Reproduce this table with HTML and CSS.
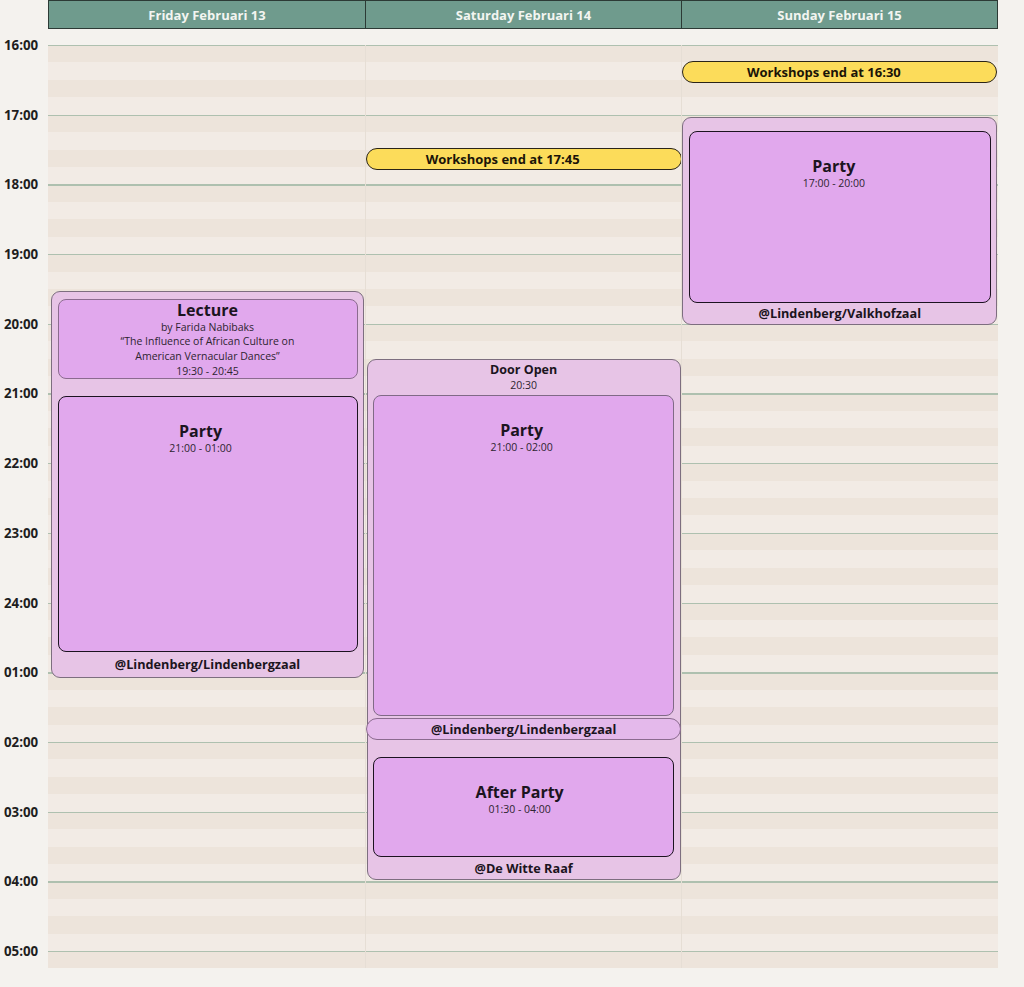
FILE: index.html
```html
<!DOCTYPE html>
<html>
<head>
<meta charset="utf-8">
<title>Schedule</title>
<link rel="stylesheet" href="styles.css">
</head>
<body>
<div class="page">
  <div class="head">
    <div class="head-cells">
      <div class="hcell">Friday Februari 13</div>
      <div class="hcell">Saturday Februari 14</div>
      <div class="hcell">Sunday Februari 15</div>
    </div>
  </div>
  <div class="body">
    <div class="times">
      <div class="t">16:00</div>
      <div class="t">17:00</div>
      <div class="t">18:00</div>
      <div class="t">19:00</div>
      <div class="t">20:00</div>
      <div class="t">21:00</div>
      <div class="t">22:00</div>
      <div class="t">23:00</div>
      <div class="t">24:00</div>
      <div class="t">01:00</div>
      <div class="t">02:00</div>
      <div class="t">03:00</div>
      <div class="t">04:00</div>
      <div class="t">05:00</div>
    </div>
    <div class="grid">
      <div class="day">
        <div class="block block-fri" style="top:246px;height:387px">
          <div class="sub lecture" style="height:80px">
            <div class="title-s">Lecture</div>
            <div class="line">by Farida Nabibaks</div>
            <div class="line">“The Influence of African Culture on<br>American Vernacular Dances”</div>
            <div class="line">19:30 - 20:45</div>
          </div>
          <div class="main party-fri" style="height:256px">
            <div class="title">Party</div>
            <div class="time">21:00 - 01:00</div>
          </div>
          <div class="venue">@Lindenberg/Lindenbergzaal</div>
        </div>
      </div>
      <div class="day">
        <div class="note note-sat" style="top:103px">Workshops end at 17:45</div>
        <div class="block block-sat" style="top:314px;height:521px">
          <div class="door">
            <div class="door-title">Door Open</div>
            <div class="time">20:30</div>
          </div>
          <div class="main soft" style="height:321px">
            <div class="title">Party</div>
            <div class="time">21:00 - 02:00</div>
          </div>
          <div class="venue-pill">@Lindenberg/Lindenbergzaal</div>
          <div class="main after" style="height:100px">
            <div class="title">After Party</div>
            <div class="time">01:30 - 04:00</div>
          </div>
          <div class="venue">@De Witte Raaf</div>
        </div>
      </div>
      <div class="day">
        <div class="note note-sun" style="top:16px">Workshops end at 16:30</div>
        <div class="block block-sun" style="top:72px;height:208px">
          <div class="main party-sun" style="height:172px">
            <div class="title">Party</div>
            <div class="time">17:00 - 20:00</div>
          </div>
          <div class="venue">@Lindenberg/Valkhofzaal</div>
        </div>
      </div>
    </div>
  </div>
</div>
</body>
</html>
```

FILE: styles.css
```css
* { box-sizing: border-box; }

body {
  margin: 0;
  background: #f4f2ee;
  font-family: "Open Sans", "Noto Sans", "Liberation Sans", sans-serif;
  color: #1b1420;
}

.page {
  width: 1024px;
  height: 987px;
  overflow: hidden;
}

.head {
  display: flex;
  padding-left: 48px;
}

.head-cells {
  width: 950px;
  height: 29px;
  display: grid;
  grid-template-columns: repeat(3, 1fr);
  background: #6f9b8d;
  border: 1.5px solid #2c3a35;
}

.hcell {
  display: flex;
  align-items: center;
  justify-content: center;
  color: #f3f5f1;
  font-weight: 700;
  font-size: 13px;
}

.hcell + .hcell {
  border-left: 1.5px solid #2c3a35;
}

.body {
  display: flex;
  align-items: flex-start;
  margin-top: 16px;
}

.times {
  width: 48px;
  margin-top: -34.85px;
  display: flex;
  flex-direction: column;
}

.t {
  height: 69.7px;
  display: flex;
  align-items: center;
  padding-left: 4px;
  font-weight: 700;
  font-size: 13.3px;
  color: #1e1e1e;
}

.grid {
  width: 950px;
  height: 923px;
  display: grid;
  grid-template-columns: repeat(3, 1fr);
  background:
    repeating-linear-gradient(to bottom, #aec0af 0 1.3px, transparent 1.3px 69.7px),
    repeating-linear-gradient(to bottom, #ede4db 0 17.425px, #f2ebe5 17.425px 34.85px);
}

.day {
  position: relative;
}

.day + .day {
  border-left: 1px solid #e6ded5;
}

.note {
  position: absolute;
  left: 0;
  height: 22px;
  background: #fcdc5a;
  border: 1.5px solid #2a2418;
  border-radius: 12px;
  display: flex;
  align-items: center;
  justify-content: center;
  font-weight: 700;
  font-size: 13px;
  color: #1a1408;
}

.note-sat { width: 316px; padding-right: 42px; }
.note-sun { width: 315px; padding-right: 32px; }

.block {
  position: absolute;
  display: flex;
  flex-direction: column;
  padding: 0 5.5px;
  background: #e7c4e6;
  border: 1.5px solid #7d6e7f;
  border-radius: 9px;
}

.block-fri { left: 3px; width: 313px; padding-top: 6.5px; }
.block-sat { left: 1px; width: 314px; }
.block-sun { left: 0; width: 315px; padding-top: 12.5px; }

.sub {
  background: #e1a8ed;
  border: 1px solid #8b6b8f;
  border-radius: 8px;
  text-align: center;
  padding-top: 1px;
}

.title-s {
  font-weight: 700;
  font-size: 16px;
  line-height: 19px;
}

.line {
  font-size: 10.5px;
  line-height: 14.7px;
  color: #2e2530;
}

.main {
  background: #e1a8ed;
  border: 1.5px solid #1c1320;
  border-radius: 8px;
  text-align: center;
  padding-top: 24px;
}

.main.soft {
  border-color: #806a86;
  padding-right: 4px;
}

.party-fri {
  margin-top: 17px;
  padding-right: 14px;
}

.party-sun {
  padding-right: 12px;
}

.title {
  font-weight: 700;
  font-size: 16px;
  line-height: 20px;
}

.time {
  font-size: 10.5px;
  line-height: 14px;
  color: #2e2530;
}

.door {
  height: 34.5px;
  padding-top: 2px;
  text-align: center;
}

.door-title {
  font-weight: 700;
  font-size: 12.5px;
  line-height: 16px;
}

.venue-pill {
  margin: 2px -7px 0;
  height: 22px;
  border: 1px solid #8b6b8f;
  border-radius: 11px;
  background: #e4b9eb;
  display: flex;
  align-items: center;
  justify-content: center;
  font-weight: 700;
  font-size: 12.7px;
}

.after {
  margin-top: 17px;
  padding-right: 8px;
}

.venue {
  flex: 1;
  display: flex;
  align-items: center;
  justify-content: center;
  font-weight: 700;
  font-size: 12.7px;
}
```
